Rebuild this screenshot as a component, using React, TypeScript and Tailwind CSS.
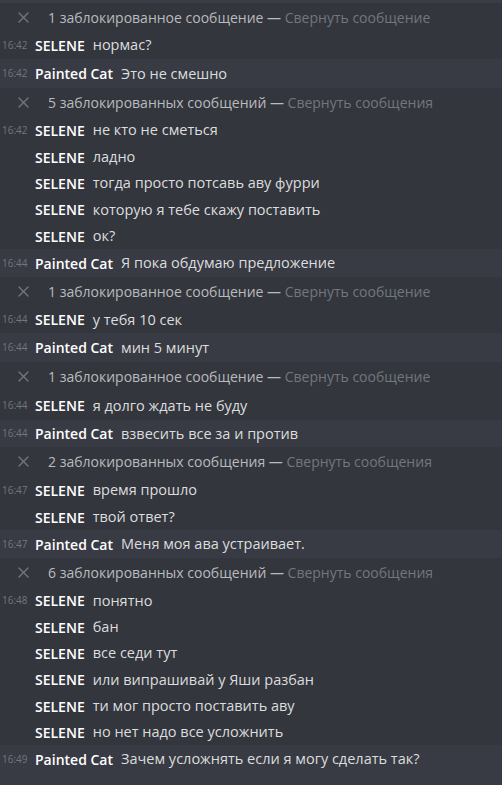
import React from "react";

type Row =
  | { kind: "blocked"; count: string; action: string; h: string }
  | { kind: "msg"; time?: string; name: string; text: string; h: string; light?: boolean };

const rows: Row[] = [
  { kind: "blocked", count: "1 заблокированное сообщение", action: "Свернуть сообщение", h: "h-[28px]" },
  { kind: "msg", time: "16:42", name: "SELENE", text: "нормас?", h: "h-[28px]" },
  { kind: "msg", time: "16:42", name: "Painted Cat", text: "Это не смешно", h: "h-[29px]", light: true },
  { kind: "blocked", count: "5 заблокированных сообщений", action: "Свернуть сообщения", h: "h-[28px]" },
  { kind: "msg", time: "16:42", name: "SELENE", text: "не кто не сметься", h: "h-[28px]" },
  { kind: "msg", name: "SELENE", text: "ладно", h: "h-[26px]" },
  { kind: "msg", name: "SELENE", text: "тогда просто потсавь аву фурри", h: "h-[26px]" },
  { kind: "msg", name: "SELENE", text: "которую я тебе скажу поставить", h: "h-[27px]" },
  { kind: "msg", name: "SELENE", text: "ок?", h: "h-[26px]" },
  { kind: "msg", time: "16:44", name: "Painted Cat", text: "Я пока обдумаю предложение", h: "h-[28px]", light: true },
  { kind: "blocked", count: "1 заблокированное сообщение", action: "Свернуть сообщение", h: "h-[29px]" },
  { kind: "msg", time: "16:44", name: "SELENE", text: "у тебя 10 сек", h: "h-[27px]" },
  { kind: "msg", time: "16:44", name: "Painted Cat", text: "мин 5 минут", h: "h-[29px]", light: true },
  { kind: "blocked", count: "1 заблокированное сообщение", action: "Свернуть сообщение", h: "h-[29px]" },
  { kind: "msg", time: "16:44", name: "SELENE", text: "я долго ждать не буду", h: "h-[29px]" },
  { kind: "msg", time: "16:44", name: "Painted Cat", text: "взвесить все за и против", h: "h-[27px]", light: true },
  { kind: "blocked", count: "2 заблокированных сообщения", action: "Свернуть сообщения", h: "h-[29px]" },
  { kind: "msg", time: "16:47", name: "SELENE", text: "время прошло", h: "h-[28px]" },
  { kind: "msg", name: "SELENE", text: "твой ответ?", h: "h-[26px]" },
  { kind: "msg", time: "16:47", name: "Painted Cat", text: "Меня моя ава устраивает.", h: "h-[28px]", light: true },
  { kind: "blocked", count: "6 заблокированных сообщений", action: "Свернуть сообщения", h: "h-[29px]" },
  { kind: "msg", time: "16:48", name: "SELENE", text: "понятно", h: "h-[27px]" },
  { kind: "msg", name: "SELENE", text: "бан", h: "h-[26px]" },
  { kind: "msg", name: "SELENE", text: "все седи тут", h: "h-[26px]" },
  { kind: "msg", name: "SELENE", text: "или випрашивай у Яши разбан", h: "h-[27px]" },
  { kind: "msg", name: "SELENE", text: "ти мог просто поставить аву", h: "h-[26px]" },
  { kind: "msg", name: "SELENE", text: "но нет надо все усложнить", h: "h-[26px]" },
  { kind: "msg", time: "16:49", name: "Painted Cat", text: "Зачем усложнять если я могу сделать так?", h: "h-[40px] pb-[12px]", light: true },
];

function XIcon() {
  return (
    <svg width="11" height="11" viewBox="0 0 11 11" fill="none">
      <path d="M1 1L10 10M10 1L1 10" stroke="#72767d" strokeWidth="1.4" strokeLinecap="round" />
    </svg>
  );
}

export default function App() {
  return (
    <div
      className="w-[502px] h-[785px] overflow-hidden bg-[#33363d] flex flex-col"
      style={{ fontFamily: '"Open Sans", "Noto Sans", sans-serif' }}
    >
      <div className="h-[3px] bg-[#3a3d45] shrink-0" />
      {rows.map((r, i) =>
        r.kind === "blocked" ? (
          <div key={i} className={`${r.h} shrink-0 flex items-center`}>
            <div className="w-[48px] pl-[18px] flex items-center">
              <XIcon />
            </div>
            <span className="text-[14px] text-[#b9bbbe] whitespace-nowrap">
              {r.count} —{" "}
              <span className="text-[#72767d]">{r.action}</span>
            </span>
          </div>
        ) : (
          <div
            key={i}
            className={`${r.h} shrink-0 flex items-center ${r.light ? "bg-[#383b43]" : ""}`}
          >
            <div className="w-[35px] pl-[2px] text-[10px] text-[#72767d] whitespace-nowrap">
              {r.time ?? ""}
            </div>
            <span className="text-[14px] font-semibold text-white whitespace-nowrap">{r.name}</span>
            <span className="ml-[8px] text-[14.5px] text-[#dcddde] whitespace-nowrap">{r.text}</span>
          </div>
        )
      )}
    </div>
  );
}
